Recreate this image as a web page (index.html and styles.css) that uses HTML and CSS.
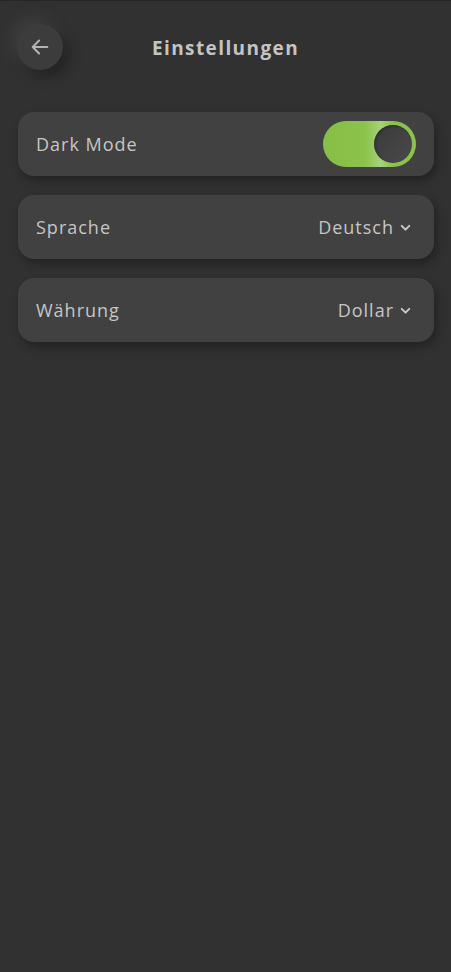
FILE: index.html
```html
<!DOCTYPE html>
<html lang="de">
<head>
<meta charset="utf-8">
<link rel="stylesheet" href="styles.css">
</head>
<body>
<div class="screen">
  <header class="header">
    <button class="back" aria-label="Zurück">
      <svg width="22" height="22" viewBox="0 0 24 24" fill="none" stroke="#b4b4b4" stroke-width="2.2" stroke-linecap="round" stroke-linejoin="round"><path d="M20 12H4.5M11 5l-7 7 7 7"/></svg>
    </button>
    <h1 class="title">Einstellungen</h1>
  </header>
  <main class="list">
    <div class="card">
      <span class="label">Dark Mode</span>
      <div class="toggle"><div class="knob"></div></div>
    </div>
    <div class="card">
      <span class="label">Sprache</span>
      <span class="value">Deutsch
        <svg width="13" height="13" viewBox="0 0 12 12" fill="none" stroke="#c8c8c8" stroke-width="1.8" stroke-linecap="round" stroke-linejoin="round"><path d="M2.5 4.5L6 8l3.5-3.5"/></svg>
      </span>
    </div>
    <div class="card">
      <span class="label">Währung</span>
      <span class="value">Dollar
        <svg width="13" height="13" viewBox="0 0 12 12" fill="none" stroke="#c8c8c8" stroke-width="1.8" stroke-linecap="round" stroke-linejoin="round"><path d="M2.5 4.5L6 8l3.5-3.5"/></svg>
      </span>
    </div>
  </main>
</div>
</body>
</html>
```

FILE: styles.css
```css
html, body {
  margin: 0;
  padding: 0;
  background: #313131;
}
body {
  font-family: "Open Sans", "Noto Sans", sans-serif;
  color: #c8c8c8;
}
.screen {
  width: 451px;
  min-height: 972px;
  box-sizing: border-box;
  border-top: 1px solid #262626;
  background: #313131;
}
.header {
  position: relative;
  height: 92px;
  display: flex;
  align-items: center;
  justify-content: center;
}
.back {
  position: absolute;
  left: 17px;
  top: 23px;
  width: 46px;
  height: 46px;
  border-radius: 50%;
  border: none;
  padding: 0;
  background: #3c3c3c;
  display: flex;
  align-items: center;
  justify-content: center;
  box-shadow: -6px -6px 16px rgba(95, 95, 95, 0.3), 6px 7px 14px rgba(0, 0, 0, 0.3);
}
.title {
  margin: 0;
  font-size: 19px;
  font-weight: 700;
  color: #c4c4c4;
  letter-spacing: 1.4px;
  padding-top: 1px;
}
.list {
  padding: 19px 17px 0 18px;
  display: flex;
  flex-direction: column;
  gap: 19px;
}
.card {
  height: 64px;
  border-radius: 16px;
  background: #414141;
  display: flex;
  align-items: center;
  justify-content: space-between;
  padding: 0 18px;
  box-shadow: 3px 5px 10px rgba(0, 0, 0, 0.3);
}
.label {
  font-size: 18px;
  color: #c6c6c6;
  letter-spacing: 1px;
}
.value {
  font-size: 18px;
  color: #c6c6c6;
  letter-spacing: 1px;
  display: flex;
  align-items: center;
  gap: 5px;
  margin-right: 4px;
}
.toggle {
  width: 93px;
  height: 46px;
  border-radius: 23px;
  background: linear-gradient(90deg, #86bf47 0%, #8bc34a 45%, #a5d27a 62%, #8bc34a 75%);
  display: flex;
  align-items: center;
  justify-content: flex-end;
  padding: 0 4px;
  box-sizing: border-box;
}
.knob {
  width: 38px;
  height: 38px;
  border-radius: 50%;
  background: linear-gradient(135deg, #3a3a3a, #4a4a4a);
  box-shadow: inset 1px 1px 3px rgba(0,0,0,0.3);
}
```
